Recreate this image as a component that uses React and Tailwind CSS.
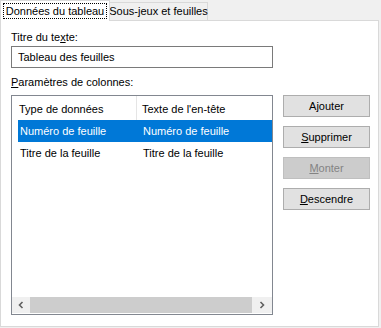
import React from "react";

const font = { fontFamily: '"Liberation Sans", Arial, sans-serif' };

function Btn({ children, disabled }) {
  return (
    <button
      className={`h-[22px] w-[87px] border text-[11px] leading-none whitespace-nowrap ${
        disabled
          ? "bg-[#cccccc] border-[#bfbfbf] text-[#838383]"
          : "bg-[#e1e1e1] border-[#adadad] text-black"
      }`}
    >
      {children}
    </button>
  );
}

export default function App() {
  const rows = [
    ["Numéro de feuille", "Numéro de feuille", true],
    ["Titre de la feuille", "Titre de la feuille", false],
  ];

  return (
    <div
      className="w-[381px] h-[328px] bg-[#f0f0f0] text-[11px] text-black overflow-hidden whitespace-nowrap"
      style={font}
    >
      <div className="flex h-[20px] items-end">
        <div className="relative z-10 h-[21px] w-[110px] bg-white border border-b-0 border-[#d9d9d9] self-start px-[2px] pt-[2px]">
          <div className="h-[16px] border border-dotted border-black flex items-center justify-center leading-none">
            Données du tableau
          </div>
        </div>
        <div className="h-[18px] w-[99px] -ml-px border border-b-0 border-[#d9d9d9] bg-[#f0f0f0] flex items-center justify-center leading-none">
          Sous-jeux et feuilles
        </div>
      </div>

      <div className="w-[379px] h-[307px] bg-white border border-[#d9d9d9] flex pl-[10px] pt-[8px]">
        <div className="w-[262px] flex flex-col">
          <div className="h-[17px] leading-[17px]">
            Titre du te<span className="underline">x</span>te:
          </div>
          <div className="h-[22px] border border-[#7a7a7a] flex items-center px-[6px] leading-none">
            Tableau des feuilles
          </div>
          <div className="h-[17px] leading-[17px] mt-[6px]">
            <span className="underline">P</span>aramètres de colonnes:
          </div>
          <div className="mt-[4px] h-[220px] border border-[#828790] flex flex-col">
            <div className="h-[24px] flex items-center">
              <div className="w-[125px] h-full pl-[7px] pt-[2px] flex items-center border-r border-[#e5e5e5]">
                Type de données
              </div>
              <div className="pl-[5px] pt-[2px]">Texte de l'en-tête</div>
            </div>
            {rows.map(([a, b, sel]) => (
              <div key={a} className="h-[22px] flex pl-[6px]">
                <div
                  className={`flex-1 flex items-center ${
                    sel ? "bg-[#0078d7] text-white" : ""
                  }`}
                >
                  <div className="w-[119px] pl-[2px]">{a}</div>
                  <div className="pl-[6px]">{b}</div>
                </div>
              </div>
            ))}
            <div className="flex-1" />
            <div className="h-[16px] mb-[1px] flex bg-[#f0f0f0]">
              <div className="w-[18px] flex items-center justify-center">
                <svg width="8" height="8" viewBox="0 0 8 8">
                  <path d="M5.5 1 L2.5 4 L5.5 7" fill="none" stroke="#606060" strokeWidth="1.6" />
                </svg>
              </div>
              <div className="flex-1 bg-[#cdcdcd]" />
              <div className="w-[20px] flex items-center justify-center">
                <svg width="8" height="8" viewBox="0 0 8 8">
                  <path d="M2.5 1 L5.5 4 L2.5 7" fill="none" stroke="#606060" strokeWidth="1.6" />
                </svg>
              </div>
            </div>
          </div>
        </div>

        <div className="ml-[10px] pt-[66px] flex flex-col gap-[9px]">
          <Btn>
            A<span className="underline">j</span>outer
          </Btn>
          <Btn>
            <span className="underline">S</span>upprimer
          </Btn>
          <Btn disabled>
            <span className="underline">M</span>onter
          </Btn>
          <Btn>
            <span className="underline">D</span>escendre
          </Btn>
        </div>
      </div>
    </div>
  );
}
